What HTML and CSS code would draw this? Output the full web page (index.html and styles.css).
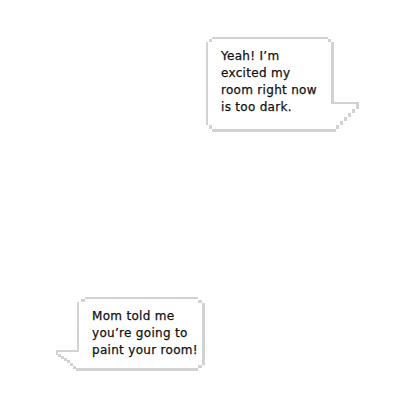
FILE: index.html
```html
<!DOCTYPE html>
<html lang="en">

<head>
    <meta charset="UTF-8">
    <meta name="viewport" content="width=device-width, initial-scale=1.0">
    <title>Chat</title>
    <link rel="stylesheet" href="styles.css">
</head>

<body>
    <div class="chat">
        <!-- reply bubble, tail on the right -->
        <div class="bubble bubble-right">
            <svg class="outline" width="156" height="96" viewBox="0 0 156 96" shape-rendering="crispEdges">
                <rect x="6" y="0" width="116" height="2" />
                <rect x="3" y="2" width="3" height="3" />
                <rect x="0" y="5" width="2" height="83" />
                <rect x="3" y="88" width="3" height="4" />
                <rect x="6" y="92" width="124" height="3" />
                <rect x="122" y="2" width="3" height="3" />
                <rect x="125" y="5" width="3" height="62" />
                <rect x="125" y="65" width="28" height="2" />
                <rect x="150" y="67" width="3" height="5" />
                <rect x="146" y="72" width="3" height="4" />
                <rect x="142" y="76" width="3" height="4" />
                <rect x="138" y="80" width="3" height="4" />
                <rect x="134" y="84" width="3" height="4" />
                <rect x="130" y="88" width="3" height="4" />
            </svg>
            <p class="text">Yeah! I’m<br>excited my<br>room right now<br>is too dark.</p>
        </div>

        <!-- incoming bubble, tail on the left -->
        <div class="bubble bubble-left">
            <svg class="outline" width="150" height="75" viewBox="0 0 150 75" shape-rendering="crispEdges">
                <rect x="29" y="0" width="113" height="2" />
                <rect x="25" y="2" width="4" height="3" />
                <rect x="21" y="5" width="2" height="50" />
                <rect x="0" y="53" width="23" height="2" />
                <rect x="0" y="55" width="2" height="3" />
                <rect x="2" y="57" width="3" height="3" />
                <rect x="5" y="59" width="3" height="3" />
                <rect x="8" y="61" width="3" height="3" />
                <rect x="11" y="63" width="3" height="3" />
                <rect x="14" y="66" width="3" height="3" />
                <rect x="17" y="69" width="3" height="3" />
                <rect x="20" y="71" width="122" height="3" />
                <rect x="142" y="3" width="4" height="3" />
                <rect x="146" y="6" width="3" height="62" />
                <rect x="142" y="68" width="4" height="3" />
            </svg>
            <p class="text">Mom told me<br>you’re going to<br>paint your room!</p>
        </div>
    </div>
</body>

</html>
```

FILE: styles.css
```css
body {
    margin: 0;
    background-color: #ffffff;
    font-family: "DejaVu Sans", sans-serif;
}

.chat {
    display: flex;
    flex-direction: column;
    align-items: flex-start;
}

.bubble {
    position: relative;
}

.outline {
    position: absolute;
    top: 0;
    left: 0;
    fill: #d2d2d2;
}

.text {
    position: relative;
    margin: 0;
    font-size: 12px;
    line-height: 17px;
    letter-spacing: 0.3px;
    color: #111111;
    -webkit-text-stroke: 0.25px #111111;
}

.bubble-right {
    width: 156px;
    height: 96px;
    margin-left: 206px;
    margin-top: 37px;
}

.bubble-right .text {
    padding: 11px 0 0 15px;
}

.bubble-left {
    width: 150px;
    height: 75px;
    margin-left: 56px;
    margin-top: 164px;
}

.bubble-left .text {
    padding: 11px 0 0 36px;
}
```
